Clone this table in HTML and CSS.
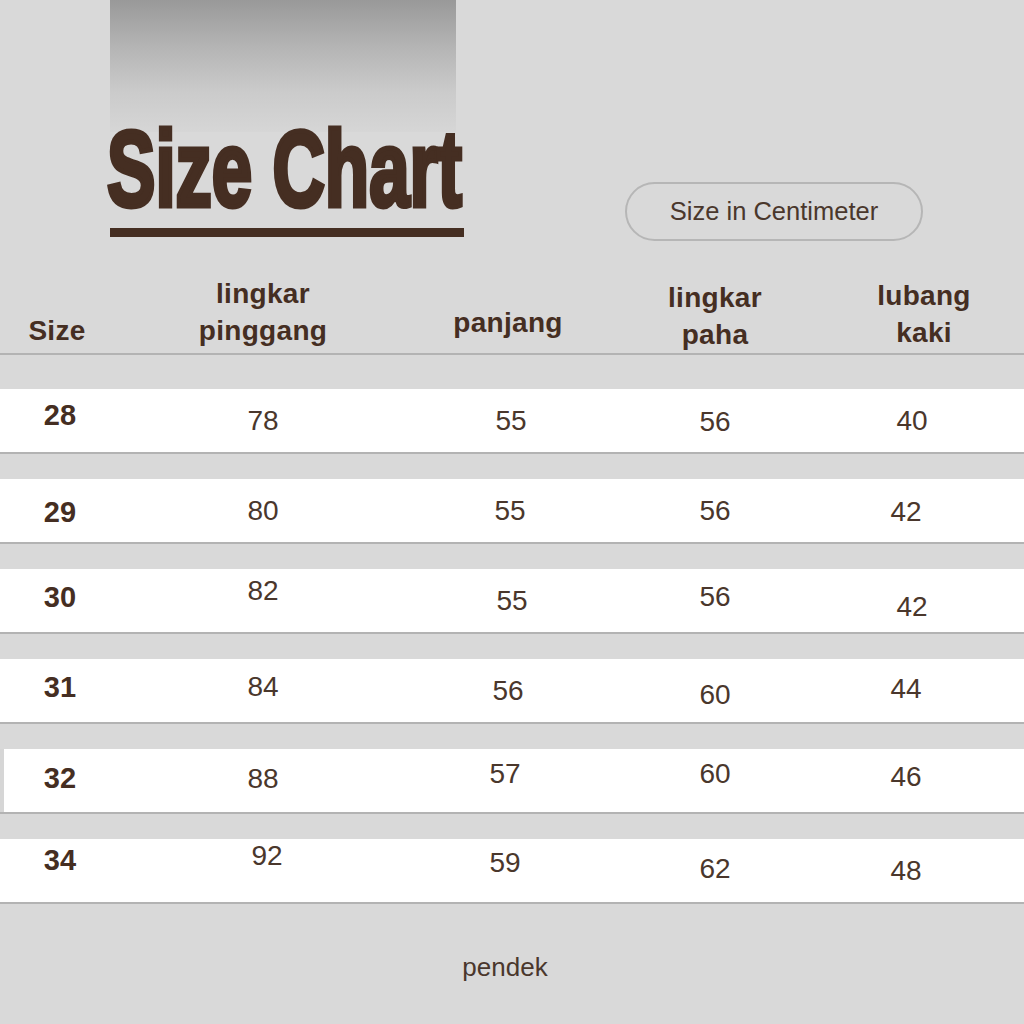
FILE: index.html
```html
<!DOCTYPE html>
<html lang="id">
<head>
<meta charset="utf-8">
<title>Size Chart</title>
<link rel="stylesheet" href="styles.css">
</head>
<body>
<div class="page">
  <header class="hero">
    <div class="brand">
      <h1 class="title">Size Chart</h1>
      <div class="rule"></div>
    </div>
    <div class="pill">Size in Centimeter</div>
  </header>

  <div class="thead">
    <div class="th th-size">Size</div>
    <div class="th">lingkar<br>pinggang</div>
    <div class="th th-mid">panjang</div>
    <div class="th th-low">lingkar<br>paha</div>
    <div class="th th-last">lubang<br>kaki</div>
  </div>

  <div class="rows">
    <div class="row">
      <div class="td size u6">28</div>
      <div class="td">78</div>
      <div class="td r3">55</div>
      <div class="td d1">56</div>
      <div class="td r6">40</div>
    </div>
    <div class="row">
      <div class="td size d1">29</div>
      <div class="td">80</div>
      <div class="td r2">55</div>
      <div class="td">56</div>
      <div class="td d1">42</div>
    </div>
    <div class="row">
      <div class="td size u4">30</div>
      <div class="td u10">82</div>
      <div class="td r4">55</div>
      <div class="td u4">56</div>
      <div class="td d6 r6">42</div>
    </div>
    <div class="row">
      <div class="td size u4">31</div>
      <div class="td u4">84</div>
      <div class="td">56</div>
      <div class="td d4">60</div>
      <div class="td u2">44</div>
    </div>
    <div class="row inset">
      <div class="td size u3">32</div>
      <div class="td u2">88</div>
      <div class="td u7 l3">57</div>
      <div class="td u7">60</div>
      <div class="td u4">46</div>
    </div>
    <div class="row">
      <div class="td size u11">34</div>
      <div class="td u15 r4">92</div>
      <div class="td u8 l3">59</div>
      <div class="td u2">62</div>
      <div class="td">48</div>
    </div>
  </div>

  <footer class="foot">pendek</footer>
</div>
</body>
</html>
```
FILE: styles.css
```css
* { box-sizing: border-box; }

html, body {
  margin: 0;
  padding: 0;
}

body {
  background: #d9d9d9;
  color: #452e22;
  font-family: "Liberation Sans", Arial, sans-serif;
}

.page {
  width: 1024px;
  height: 1024px;
  overflow: hidden;
}

/* ---------- hero ---------- */
.hero {
  display: flex;
  align-items: flex-start;
  height: 270px;
  padding-left: 104px;
}

.brand {
  width: 362px;
  background-image: linear-gradient(180deg, #999999 0%, #b4b4b4 35%, #cbcbcb 70%, #d6d6d6 100%);
  background-repeat: no-repeat;
  background-size: 346px 132px;
  background-position: 6px 0;
  padding-top: 115px;
}

.title {
  margin: 0 0 0 3px;
  font-family: "Liberation Sans", Arial, sans-serif;
  font-weight: 700;
  font-size: 108px;
  line-height: 108px;
  height: 108px;
  white-space: nowrap;
  color: #452e22;
  -webkit-text-stroke: 5px #452e22;
  transform: scaleX(0.672);
  transform-origin: 0 0;
}

.rule {
  margin-top: 5px;
  margin-left: 6px;
  width: 354px;
  height: 9px;
  background: #452e22;
}

.pill {
  margin-left: 159px;
  margin-top: 182px;
  width: 298px;
  height: 59px;
  border: 2px solid #b6b6b6;
  border-radius: 30px;
  display: flex;
  align-items: center;
  justify-content: center;
  font-size: 25.5px;
  color: #4a372c;
}

/* ---------- table ---------- */
.thead,
.row {
  display: grid;
  grid-template-columns: 120px 286px 204px 210px 172px;
}

.thead {
  height: 85px;
  border-bottom: 2px solid #b3b3b3;
  align-items: end;
}

.th {
  font-weight: 700;
  font-size: 28px;
  line-height: 37px;
  letter-spacing: 0.3px;
  text-align: center;
  padding-bottom: 4px;
}

.th-size { padding-right: 6px; }
.th-mid { padding-bottom: 12px; }
.th-low { padding-bottom: 0; }
.th-last { padding-left: 36px; padding-bottom: 2px; }

.rows {
  padding-top: 34px;
}

.row {
  height: 65px;
  background: #ffffff;
  border-bottom: 2px solid #b3b3b3;
  margin-bottom: 25px;
  align-items: center;
}

.row.inset {
  box-shadow: inset 4px 0 0 #d6d6d6;
}

.td {
  text-align: center;
  font-size: 28px;
  line-height: 32px;
  color: #4a372c;
}

.td.size {
  font-weight: 700;
  font-size: 29px;
  color: #452e22;
}

/* per-cell placement quirks of the source artwork */
.u2 { margin-bottom: 4px; }
.u3 { margin-bottom: 6px; }
.u4 { margin-bottom: 8px; }
.u6 { margin-bottom: 12px; }
.u7 { margin-bottom: 14px; }
.u8 { margin-bottom: 16px; }
.u10 { margin-bottom: 20px; }
.u11 { margin-bottom: 22px; }
.u15 { margin-bottom: 30px; }
.d1 { margin-top: 2px; }
.d4 { margin-top: 8px; }
.d6 { margin-top: 12px; }
.r2 { padding-left: 4px; }
.r3 { padding-left: 6px; }
.r4 { padding-left: 8px; }
.r6 { padding-left: 12px; }
.l3 { padding-right: 6px; }

/* ---------- footer ---------- */
.foot {
  margin-top: 48px;
  padding-right: 14px;
  text-align: center;
  font-size: 26px;
  line-height: 30px;
  color: #4a372c;
}
```
